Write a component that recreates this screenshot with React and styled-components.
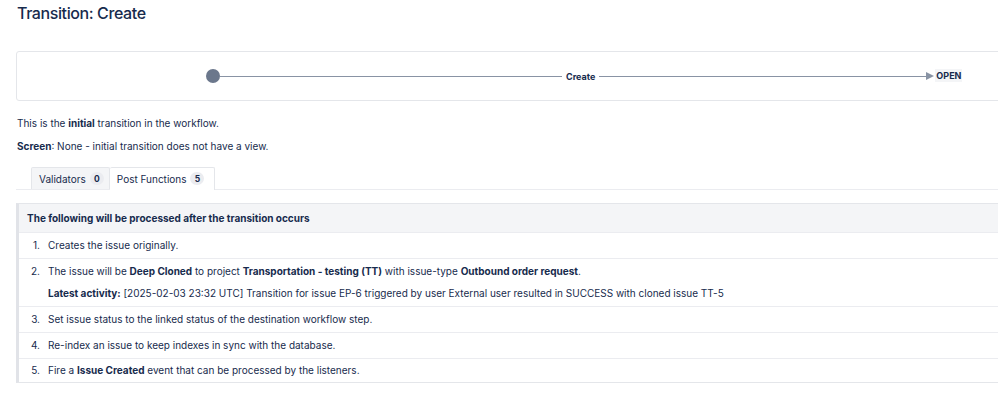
import React from 'react';
import styled, { createGlobalStyle, css } from 'styled-components';

const GlobalStyle = createGlobalStyle`
    html, body {
        margin: 0;
        padding: 0;
        background: #FFFFFF;
        overflow: hidden;
    }
    body {
        font-family: Inter, "Noto Sans", "Liberation Sans", sans-serif;
        color: #172B4D;
    }
`

const Page = styled.div`
    width: 1200px;
    padding: 3px 0 0 16px;
    box-sizing: border-box;
`
const Title = styled.h1`
    margin: 0 0 0 1px;
    font-size: 16px;
    line-height: 20px;
    font-weight: 500;
    letter-spacing: -0.4px;
    color: #172B4D;
`
const Diagram = styled.div`
    margin-top: 28px;
    height: 50px;
    border: 1px solid #E4E6EA;
    border-radius: 3px;
    display: flex;
    align-items: center;
    padding-left: 189px;
    box-sizing: border-box;
`
const StartNode = styled.div`
    width: 14px;
    height: 14px;
    border-radius: 50%;
    background: #6B778C;
    flex-shrink: 0;
`
const Line = styled.div`
    width: ${p => p.w}px;
    height: 1px;
    background: #8993A4;
    position: relative;
    ${p => p.arrow && css`
        &::after {
            content: '';
            position: absolute;
            right: -7px;
            top: -4px;
            border-left: 8px solid #8993A4;
            border-top: 4.5px solid transparent;
            border-bottom: 4.5px solid transparent;
        }
    `}
`
const EdgeLabel = styled.span`
    font-size: 9px;
    font-weight: 700;
    padding: 0 4px;
    color: #172B4D;
`
const StatusLabel = styled.span`
    margin-left: 8px;
    font-size: 9px;
    font-weight: 700;
    padding: 1px 1px;
    background: #F4F5F7;
    color: #172B4D;
    position: relative;
    top: -1px;
`
const Para = styled.p`
    margin: ${p => p.top}px 0 0 1px;
    font-size: 10px;
    line-height: 14px;
`
const Tabs = styled.div`
    margin-top: 14px;
    display: flex;
    padding-left: 15px;
    border-bottom: 1px solid #EBECF0;
`
const Tab = styled.div`
    height: 22px;
    display: flex;
    align-items: center;
    gap: 4px;
    padding: 0 5px 0 7px;
    font-size: 10px;
    box-sizing: border-box;
    border: 1px solid #E4E6EA;
    border-bottom: none;
    margin-bottom: -1px;
    background: ${p => p.active ? '#FFFFFF' : '#F4F5F7'};
    ${p => p.active && css`
        height: 23px;
        padding: 0 10px 1px 7px;
        border-left: none;
    `}
    border-radius: 2px 2px 0 0;
`
const Badge = styled.span`
    font-size: 8.5px;
    font-weight: 700;
    background: #EBECF0;
    border-radius: 8px;
    min-width: 14px;
    height: 13px;
    display: inline-flex;
    align-items: center;
    justify-content: center;
`
const Table = styled.div`
    margin-top: 13px;
    border: 1px solid #E4E6EA;
    border-left: 3px solid #E1E3E8;
    border-right: none;
`
const HeaderRow = styled.div`
    height: 28px;
    display: flex;
    align-items: center;
    padding-left: 8px;
    background: #F4F5F7;
    font-size: 10px;
    font-weight: 700;
    border-bottom: 1px solid #EBECF0;
`
const Row = styled.div`
    display: grid;
    grid-template-columns: 29px 1fr;
    padding: ${p => p.last ? '5px 0 5px' : '6px 0 6px'};
    font-size: 10px;
    line-height: 13px;
    border-top: ${p => p.first ? 'none' : '1px solid #EBECF0'};
`
const Num = styled.span`
    text-align: right;
    padding-right: 8px;
`
const Lines = styled.div`
    display: flex;
    flex-direction: column;
    gap: 9px;
`

const steps = [
    <>Creates the issue originally.</>,
    <Lines>
        <span>The issue will be <b>Deep Cloned</b> to project <b>Transportation - testing (TT)</b> with issue-type <b>Outbound order request</b>.</span>
        <span><b>Latest activity:</b> [2025-02-03 23:32 UTC] Transition for issue EP-6 triggered by user External user resulted in SUCCESS with cloned issue TT-5</span>
    </Lines>,
    <>Set issue status to the linked status of the destination workflow step.</>,
    <>Re-index an issue to keep indexes in sync with the database.</>,
    <>Fire a <b>Issue Created</b> event that can be processed by the listeners.</>,
]

export default function App() {
    return (
        <Page>
            <GlobalStyle />
            <Title>Transition: Create</Title>
            <Diagram>
                <StartNode />
                <Line w={342} />
                <EdgeLabel>Create</EdgeLabel>
                <Line w={328} arrow />
                <StatusLabel>OPEN</StatusLabel>
            </Diagram>
            <Para top={15}>This is the <b>initial</b> transition in the workflow.</Para>
            <Para top={9}><b>Screen</b>: None - initial transition does not have a view.</Para>
            <Tabs>
                <Tab>Validators <Badge>0</Badge></Tab>
                <Tab active>Post Functions <Badge>5</Badge></Tab>
            </Tabs>
            <Table>
                <HeaderRow>The following will be processed after the transition occurs</HeaderRow>
                {steps.map((s, i) => (
                    <Row key={i} first={i === 0} last={i === steps.length - 1}>
                        <Num>{i + 1}.</Num>
                        <div>{s}</div>
                    </Row>
                ))}
            </Table>
        </Page>
    );
}
